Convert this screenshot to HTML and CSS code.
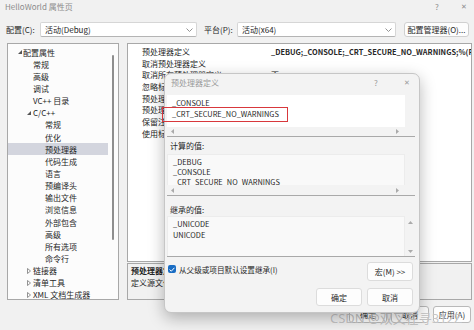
FILE: index.html
```html
<!DOCTYPE html>
<html lang="zh-CN">
<head>
    <meta charset="UTF-8">
    <title>HelloWorld 属性页</title>
    <link rel="stylesheet" href="styles.css">
</head>
<body>
    <div class="window">
        <div class="titlebar">
            <span class="title">HelloWorld 属性页</span>
            <span class="tb-help">?</span>
            <span class="tb-close">✕</span>
        </div>

        <div class="config-row">
            <span class="cfg-label">配置(C):</span>
            <div class="select cfg-select">
                <span>活动(Debug)</span>
                <svg width="7" height="4" viewBox="0 0 7 4"><polyline points="0.5,0.5 3.5,3.5 6.5,0.5" fill="none" stroke="#888" stroke-width="0.9"/></svg>
            </div>
            <span class="cfg-label plat-label">平台(P):</span>
            <div class="select plat-select">
                <span>活动(x64)</span>
                <svg width="7" height="4" viewBox="0 0 7 4"><polyline points="0.5,0.5 3.5,3.5 6.5,0.5" fill="none" stroke="#888" stroke-width="0.9"/></svg>
            </div>
            <button class="btn mgr-btn">配置管理器(O)...</button>
        </div>

        <div class="main">
            <div class="tree">
                <ul class="tree-list">
                    <li class="lvl0"><span class="tw"><svg width="4" height="4" viewBox="0 0 4 4"><polygon points="4,0 4,4 0,4" fill="#555"/></svg></span>配置属性</li>
                    <li class="lvl1">常规</li>
                    <li class="lvl1">高级</li>
                    <li class="lvl1">调试</li>
                    <li class="lvl1">VC++ 目录</li>
                    <li class="lvl1 has-tw"><span class="tw"><svg width="4" height="4" viewBox="0 0 4 4"><polygon points="4,0 4,4 0,4" fill="#555"/></svg></span>C/C++</li>
                    <li class="lvl2">常规</li>
                    <li class="lvl2">优化</li>
                    <li class="lvl2 sel">预处理器</li>
                    <li class="lvl2">代码生成</li>
                    <li class="lvl2">语言</li>
                    <li class="lvl2">预编译头</li>
                    <li class="lvl2">输出文件</li>
                    <li class="lvl2">浏览信息</li>
                    <li class="lvl2">外部包含</li>
                    <li class="lvl2">高级</li>
                    <li class="lvl2">所有选项</li>
                    <li class="lvl2">命令行</li>
                    <li class="lvl1 has-tw"><span class="tw"><svg width="4" height="6" viewBox="0 0 4 6"><polygon points="0.5,0.5 3.5,3 0.5,5.5" fill="none" stroke="#777" stroke-width="0.8"/></svg></span>链接器</li>
                    <li class="lvl1 has-tw"><span class="tw"><svg width="4" height="6" viewBox="0 0 4 6"><polygon points="0.5,0.5 3.5,3 0.5,5.5" fill="none" stroke="#777" stroke-width="0.8"/></svg></span>清单工具</li>
                    <li class="lvl1 has-tw"><span class="tw"><svg width="4" height="6" viewBox="0 0 4 6"><polygon points="0.5,0.5 3.5,3 0.5,5.5" fill="none" stroke="#777" stroke-width="0.8"/></svg></span>XML 文档生成器</li>
                </ul>
                <div class="tree-scroll"><div class="thumb"></div></div>
            </div>

            <div class="props">
                <div class="grid">
                    <div class="row"><span class="name">预处理器定义</span><span class="val bold">_DEBUG;_CONSOLE;_CRT_SECURE_NO_WARNINGS;%(PreprocessorDefinitions)</span></div>
                    <div class="row"><span class="name">取消预处理器定义</span><span class="val"></span></div>
                    <div class="row"><span class="name">取消所有预处理器定义</span><span class="val">否</span></div>
                    <div class="row"><span class="name">忽略标准包含路径</span><span class="val">否</span></div>
                    <div class="row"><span class="name">预处理到文件</span><span class="val">否</span></div>
                    <div class="row"><span class="name">预处理取消显示行号</span><span class="val">否</span></div>
                    <div class="row"><span class="name">保留注释</span><span class="val">否</span></div>
                    <div class="row"><span class="name">使用标准符合性预处理器</span><span class="val"></span></div>
                </div>
                <div class="desc">
                    <div class="desc-title">预处理器定义</div>
                    <div>定义源文件的预处理符号。</div>
                </div>
            </div>
        </div>

        <div class="footer">
            <button class="btn foot-btn">确定</button>
            <button class="btn foot-btn">取消</button>
            <button class="btn foot-btn">应用(A)</button>
        </div>
    </div>

    <div class="watermark">CSDN @双叉在寻312Z</div>

    <!-- 预处理器定义 对话框 -->
    <div class="dialog">
        <div class="dlg-title">
            <span class="title">预处理器定义</span>
            <span class="dlg-help">?</span>
            <span class="dlg-close">✕</span>
        </div>

        <div class="box box1">
            <div class="text">_CONSOLE<br>_CRT_SECURE_NO_WARNINGS</div>
            <div class="vscroll"></div>
            <div class="hscroll">
                <svg width="3" height="5" viewBox="0 0 3 5"><polygon points="3,0 3,5 0,2.5" fill="#aaa"/></svg>
                <svg width="3" height="5" viewBox="0 0 3 5"><polygon points="0,0 0,5 3,2.5" fill="#aaa"/></svg>
            </div>
        </div>

        <div class="dlg-label">计算的值:</div>
        <div class="box box2">
            <div class="text">_DEBUG<br>_CONSOLE<br>_CRT_SECURE_NO_WARNINGS</div>
            <div class="vscroll"></div>
            <div class="hscroll">
                <svg width="3" height="5" viewBox="0 0 3 5"><polygon points="3,0 3,5 0,2.5" fill="#aaa"/></svg>
                <svg width="3" height="5" viewBox="0 0 3 5"><polygon points="0,0 0,5 3,2.5" fill="#aaa"/></svg>
            </div>
        </div>

        <div class="dlg-label second">继承的值:</div>
        <div class="box box3">
            <div class="text">_UNICODE<br>UNICODE</div>
            <div class="vscroll">
                <svg width="5" height="3" viewBox="0 0 5 3"><polygon points="0,3 5,3 2.5,0" fill="#aaa"/></svg>
                <svg width="5" height="3" viewBox="0 0 5 3"><polygon points="0,0 5,0 2.5,3" fill="#aaa"/></svg>
            </div>
        </div>

        <div class="check-row">
            <label class="check">
                <span class="checkbox"><svg width="6" height="5" viewBox="0 0 6 5"><polyline points="0.6,2.6 2.3,4.2 5.4,0.8" fill="none" stroke="#fff" stroke-width="1"/></svg></span>
                从父级或项目默认设置继承(I)
            </label>
            <button class="btn dlg-btn macro-btn">宏(M) &gt;&gt;</button>
        </div>

        <div class="dlg-buttons">
            <button class="btn dlg-btn">确定</button>
            <button class="btn dlg-btn">取消</button>
        </div>
    </div>

    <div class="mark"></div>
</body>
</html>
```

FILE: styles.css
```css
* { box-sizing: border-box; }
body { margin: 0; width: 474px; height: 330px; overflow: hidden; position: relative; background: #f1f1f1; font-family: "Noto Sans CJK SC", "Noto Sans", sans-serif; font-size: 8px; color: #262626; }
button { font-family: inherit; font-size: 8px; color: #262626; }

/* 主窗口 */
.titlebar { display: flex; align-items: center; height: 12px; padding-left: 5px; color: #8c8c8c; }
.titlebar .title { flex: 1; }
.tb-help { width: 6px; text-align: center; margin-right: 19px; }
.tb-close { width: 10px; text-align: center; margin-right: 5px; font-size: 7px; }

.config-row { display: flex; align-items: center; height: 15px; margin-top: 10px; padding-left: 6px; }
.cfg-label { width: 34px; flex-shrink: 0; }
.plat-label { margin-left: 7px; width: 33px; }
.select { display: flex; align-items: center; justify-content: space-between; height: 15px; background: #fff; border: 1px solid #d6d6d6; border-bottom-color: #b4b4b4; border-radius: 2px; padding: 0 3px 0 4px; flex-shrink: 0; }
.cfg-select { width: 157px; }
.plat-select { width: 159px; }
.btn { background: #fdfdfd; border: 1px solid #d0d0d0; border-radius: 3px; padding: 0; white-space: nowrap; }
.mgr-btn { margin-left: 8px; width: 65px; height: 15px; flex-shrink: 0; }

.main { display: flex; gap: 8px; margin-top: 6px; height: 257px; padding: 0 2px 0 7px; }
.tree { width: 112px; flex-shrink: 0; border: 1px solid #a8a8a8; background: #fcfcfc; display: flex; overflow: hidden; }
.tree-list { flex: 1; min-width: 0; list-style: none; margin: 0; padding: 2px 0 0 0; }
.tree-list li { display: flex; align-items: center; height: 12.15px; white-space: nowrap; }
.tw { width: 5px; display: inline-flex; align-items: center; }
.lvl0 { padding-left: 10px; }
.lvl1 { padding-left: 25px; }
.lvl1.has-tw { padding-left: 19px; }
.lvl1.has-tw .tw { width: 6px; }
.lvl2 { padding-left: 37px; }
.sel { background: #d3d5de; }
.tree-scroll { width: 10px; flex-shrink: 0; padding-top: 11px; }
.thumb { width: 2px; height: 185px; margin-left: 4px; background: #8e8e8e; border-radius: 1px; }

.props { flex: 1; min-width: 0; display: flex; flex-direction: column; }
.grid { flex: 1; background: #fff; border: 1px solid #a8a8a8; padding-top: 2px; overflow: hidden; }
.row { display: flex; height: 11.7px; line-height: 11.7px; white-space: nowrap; }
.name { width: 143px; padding-left: 14px; flex-shrink: 0; overflow: hidden; }
.val.bold { font-weight: bold; font-size: 7.4px; }
.desc { height: 37px; margin-top: 1px; border: 1px solid #a8a8a8; padding: 1px 3px; line-height: 12px; }
.desc-title { font-weight: bold; }

.footer { display: flex; justify-content: flex-end; gap: 4px; margin-top: 6px; padding-right: 3px; }
.foot-btn { width: 38px; height: 17px; border-color: #b9b9b9; }

.watermark { position: absolute; left: 330px; top: 308px; font-family: "Noto Sans", "Noto Sans CJK SC", sans-serif; font-size: 13px; color: rgba(165, 165, 165, 0.65); text-shadow: 0 0 1px #fff; white-space: nowrap; }

/* 对话框 */
.dialog { position: absolute; left: 164px; top: 73px; width: 256px; height: 240px; background: #f3f3f3; border: 1px solid #c6c6c6; border-radius: 7px; box-shadow: 0 5px 16px rgba(0, 0, 0, 0.28); padding: 0 4px 0 2px; }
.dlg-title { display: flex; align-items: center; height: 16px; margin-bottom: 5px; padding-left: 4px; color: #9a9a9a; }
.dlg-title .title { flex: 1; }
.dlg-help { width: 6px; text-align: center; margin-right: 23px; }
.dlg-close { width: 10px; text-align: center; margin-right: 3px; font-size: 7px; }

.box { display: grid; grid-template-columns: 1fr 10px; border-bottom: 1px solid #a9a9a9; }
.box .text { padding: 2px 5px; font-size: 7.4px; line-height: 11px; white-space: nowrap; overflow: hidden; }
.box1 .text { background: #fff; height: 32px; }
.box2 .text { background: #f9f9f9; border: 1px solid #ececec; border-bottom: none; height: 31px; padding-top: 2px; line-height: 10px; }
.box3 .text { background: #f9f9f9; border: 1px solid #ececec; border-bottom: none; height: 40px; padding-top: 1px; }
.hscroll { display: flex; justify-content: space-between; align-items: center; height: 9px; padding: 0 6px 0 4px; }
.box2 .hscroll { height: 10px; }
.vscroll { display: flex; flex-direction: column; justify-content: space-between; align-items: center; padding: 5px 0 3px; }

.dlg-label { height: 17px; padding: 3px 0 0 3px; line-height: 12px; }
.dlg-label.second { height: 20px; padding-top: 8px; }

.check-row { display: flex; justify-content: space-between; align-items: flex-start; margin-top: 5px; padding-right: 2px; }
.check { display: flex; align-items: center; gap: 3px; margin-top: 1px; padding-left: 1px; height: 12px; font-size: 7.6px; }
.checkbox { width: 8px; height: 8px; border-radius: 2px; background: #1a6dc4; display: inline-flex; align-items: center; justify-content: center; }
.dlg-btn { width: 46px; height: 18px; border-color: #dcdcdc; }
.macro-btn { height: 19px; }
.dlg-buttons { display: flex; justify-content: flex-end; gap: 5px; margin-top: 7px; padding-right: 2px; }

/* 红色标注框 */
.mark { position: absolute; left: 162px; top: 107px; width: 126px; height: 15px; border: 1.5px solid #d8383c; }
```
